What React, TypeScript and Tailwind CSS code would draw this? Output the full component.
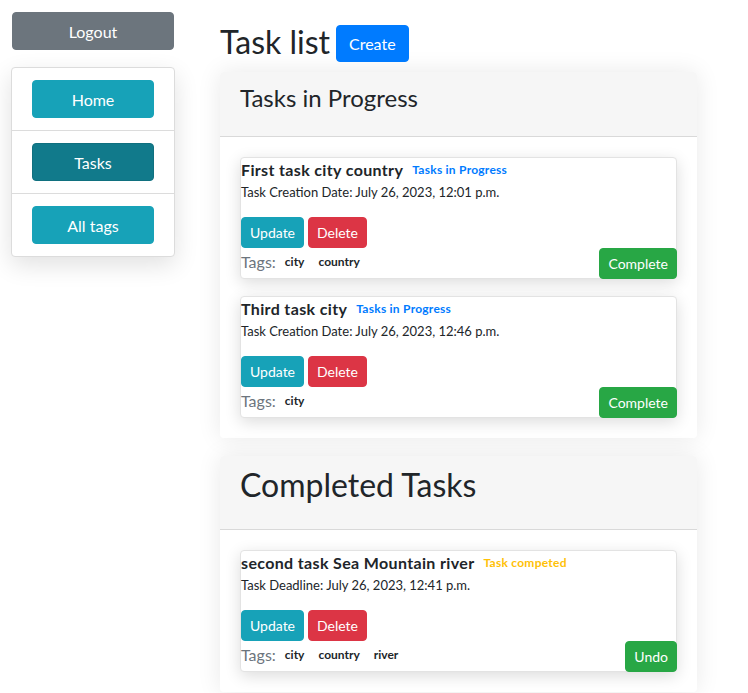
import React from "react";

type Task = {
  id: number;
  title: string;
  status: string;
  dateLabel: string;
  date: string;
  tags: string[];
  done: boolean;
};

const inProgress: Task[] = [
  { id: 1, title: "First task city country", status: "Tasks in Progress", dateLabel: "Task Creation Date", date: "July 26, 2023, 12:01 p.m.", tags: ["city", "country"], done: false },
  { id: 3, title: "Third task city", status: "Tasks in Progress", dateLabel: "Task Creation Date", date: "July 26, 2023, 12:46 p.m.", tags: ["city"], done: false },
];

const completed: Task[] = [
  { id: 2, title: "second task Sea Mountain river", status: "Task competed", dateLabel: "Task Deadline", date: "July 26, 2023, 12:41 p.m.", tags: ["city", "country", "river"], done: true },
];

const btn = "rounded-[4px] border text-white leading-6";

export default function App() {
  return (
    <div className="flex min-h-screen bg-white text-[#212529] font-['Lato','Noto_Sans',sans-serif]">
      {/* sidebar */}
      <aside className="w-[176px] shrink-0 pl-[11px] pt-[12px]">
        <button className={`${btn} ml-px h-[38px] w-[162px] border-[#6c757d] bg-[#6c757d] pt-px text-base`}>Logout</button>
        <div className="mt-[17px] w-[164px] overflow-hidden rounded-[4px] border border-[#dcdcdc] bg-white shadow-[0_8px_24px_rgba(0,0,0,0.12)]">
          {["Home", "Tasks", "All tags"].map((n, i) => (
            <div key={n} className={`px-5 py-3 ${i > 0 ? "border-t border-[#dcdcdc]" : ""}`}>
              <button className={`${btn} h-[38px] w-full pt-px text-base ${n === "Tasks" ? "border-[#10707f] bg-[#117a8b]" : "border-[#17a2b8] bg-[#17a2b8]"}`}>{n}</button>
            </div>
          ))}
        </div>
      </aside>

      {/* main */}
      <main className="ml-[44px] w-[477px] pt-[25px] pb-10">
        <div className="flex items-start gap-[6px]">
          <h1 className="text-[32px] leading-[33px] font-normal">Task list</h1>
          <button className={`${btn} h-[37px] border-[#007bff] bg-[#007bff] px-3 text-base`}>Create</button>
        </div>

        <Section title="Tasks in Progress" big={false} tasks={inProgress} />
        <Section title="Completed Tasks" big tasks={completed} />
      </main>
    </div>
  );
}

function Section({ title, big, tasks }: { title: string; big: boolean; tasks: Task[] }) {
  return (
    <section className={`${big ? "mt-[18px]" : "mt-[10px]"} rounded-[4px] bg-white shadow-[0_0_24px_rgba(0,0,0,0.09)]`}>
      <div className={`rounded-t-[4px] border-b border-[#d9d9d9] bg-[#f6f6f6] px-5 ${big ? "h-[74px] pt-[10px]" : "h-[65px] pt-[11px]"}`}>
        <h2 className={big ? "text-[32px] leading-[38px]" : "text-[24px] leading-[29px]"}>{title}</h2>
      </div>
      <div className="flex flex-col gap-[17px] p-5">
        {tasks.map((t) => <TaskCard key={t.id} task={t} />)}
      </div>
    </section>
  );
}

function TaskCard({ task }: { task: Task }) {
  return (
    <div className="rounded-[4px] border border-[#e3e3e3] bg-white shadow-[0_4px_16px_rgba(0,0,0,0.14)]">
      <div className="flex h-6 items-center gap-[9px]">
        <span className="text-base font-bold tracking-[0.35px]">{task.title}</span>
        <span className={`text-xs font-bold tracking-[0.25px] ${task.done ? "text-[#ffc107]" : "text-[#007bff]"}`}>{task.status}</span>
      </div>
      <div className="text-[13px] leading-[21px]">{task.dateLabel}: {task.date}</div>
      <div className="mt-[14px] flex gap-1">
        <button className={`${btn} h-[31px] border-[#17a2b8] bg-[#17a2b8] px-2 text-sm`}>Update</button>
        <button className={`${btn} h-[31px] border-[#dc3545] bg-[#dc3545] px-2 text-sm`}>Delete</button>
      </div>
      <div className="flex items-start justify-between">
        <div className="mt-[2px] flex items-center">
          <span className="text-base leading-6 text-[#6c757d]">Tags:</span>
          {task.tags.map((g) => (
            <span key={g} className="ml-[4px] px-[5px] text-xs font-bold">{g}</span>
          ))}
        </div>
        <button className={`${btn} -mb-px -mr-px h-[31px] border-[#28a745] bg-[#28a745] px-2 text-sm`}>{task.done ? "Undo" : "Complete"}</button>
      </div>
    </div>
  );
}
